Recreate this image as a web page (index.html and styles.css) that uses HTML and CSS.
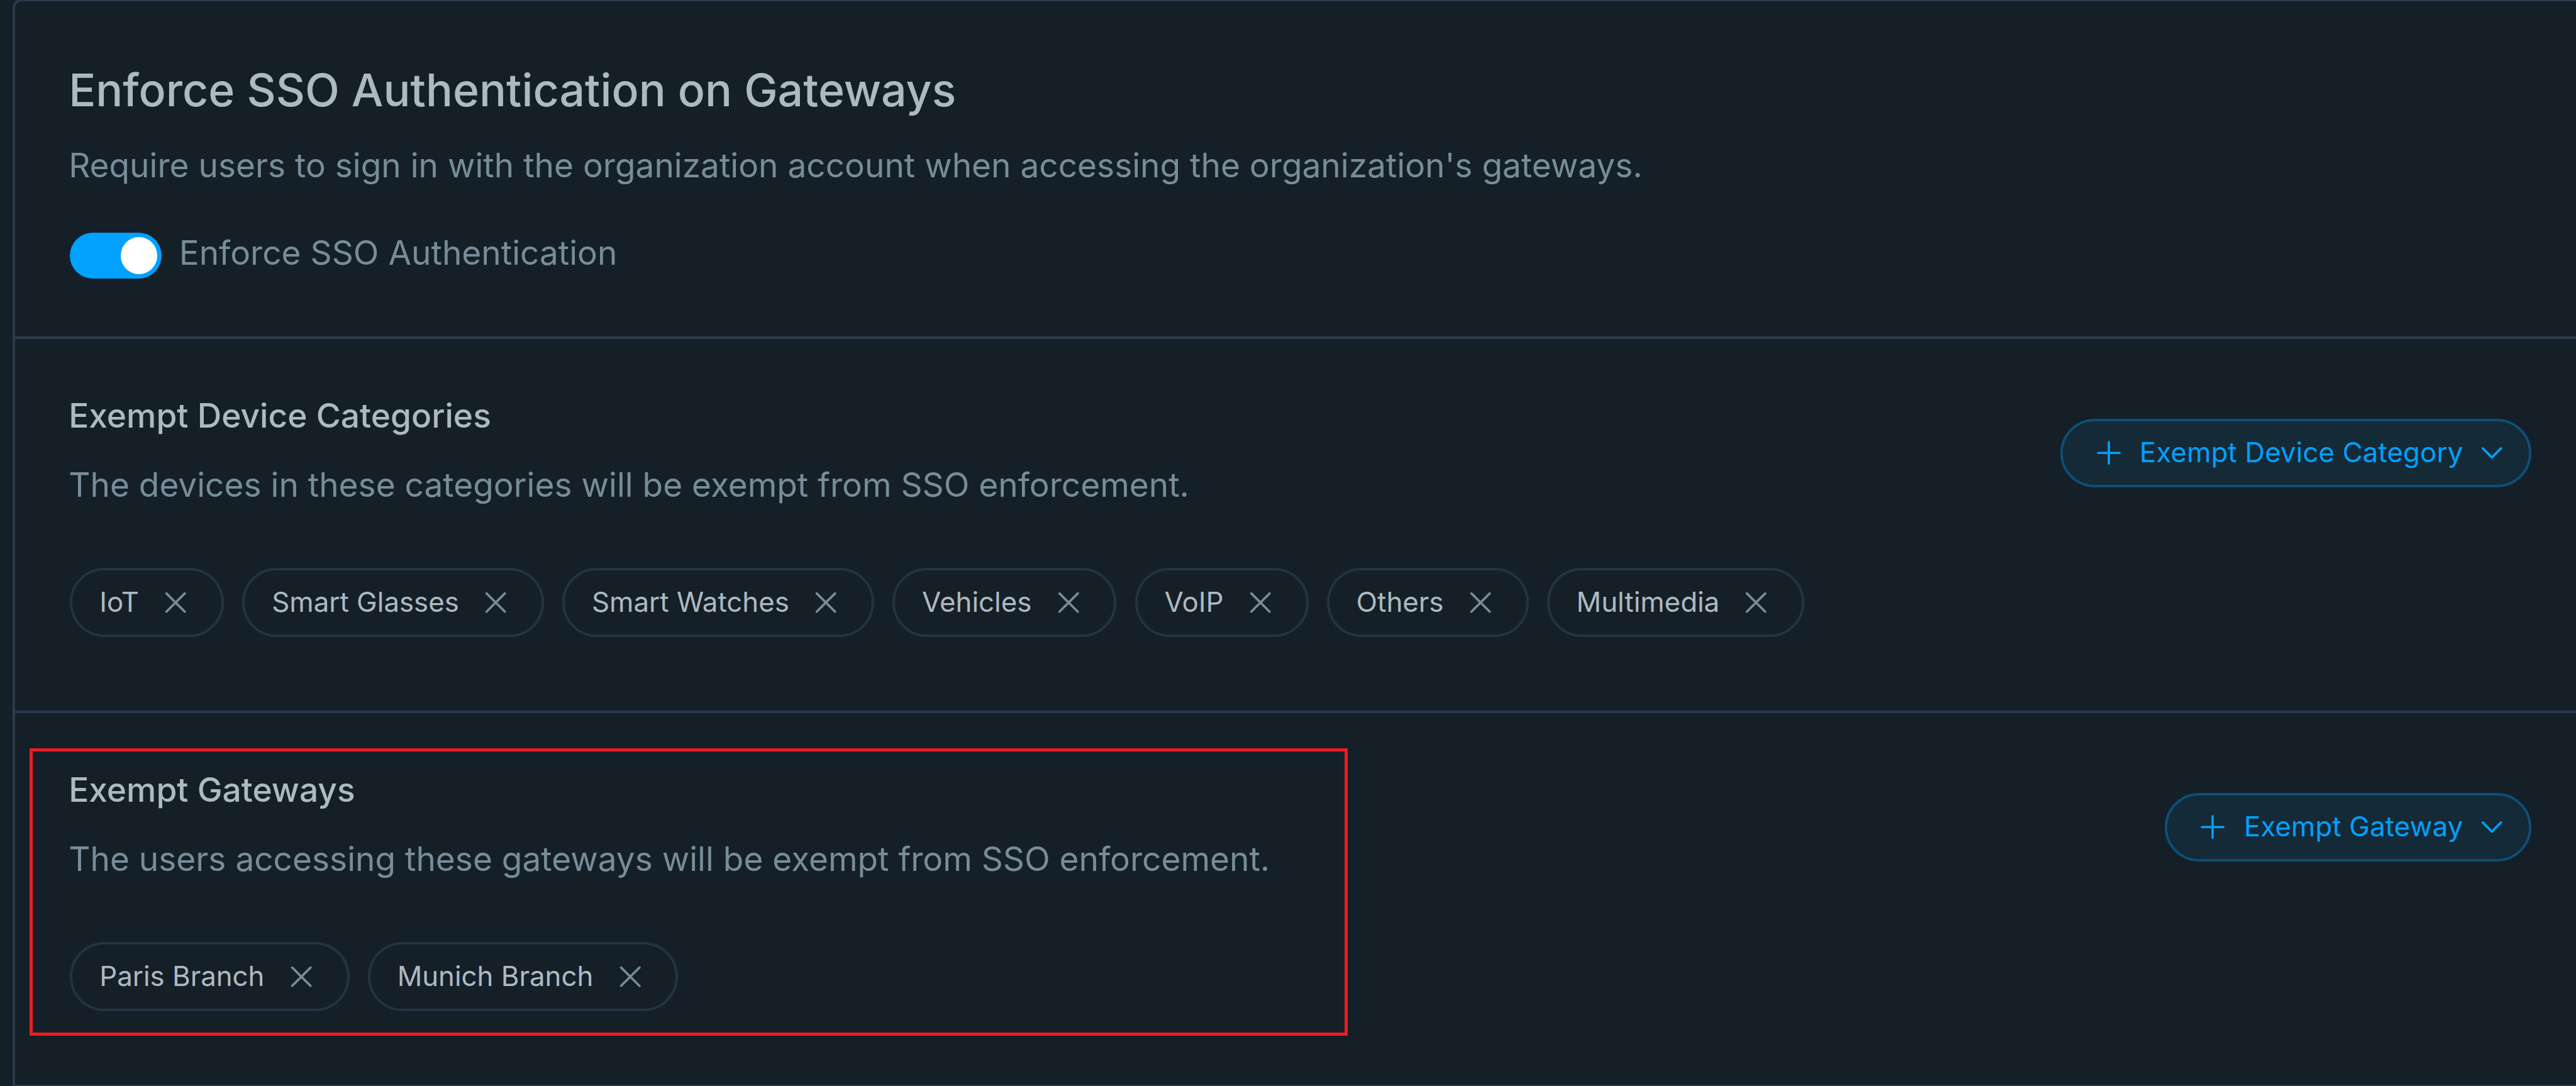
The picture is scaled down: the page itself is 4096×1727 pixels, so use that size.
FILE: index.html
```
<!DOCTYPE html>
<html lang="en">
<head>
<meta charset="utf-8">
<title>Enforce SSO Authentication on Gateways</title>
<link rel="stylesheet" href="styles.css">
</head>
<body>
<svg class="sprite" aria-hidden="true">
  <symbol id="close" viewBox="0 0 16 16"><path d="M4 4l8 8M12 4l-8 8"/></symbol>
  <symbol id="plus" viewBox="0 0 16 16"><path d="M8 3.3v9.4M3.3 8h9.4"/></symbol>
  <symbol id="chevron" viewBox="0 0 16 16"><path d="M4 6l4 4 4-4"/></symbol>
</svg>
<main class="panel">
  <section class="section section-main">
    <h1 class="title">Enforce SSO Authentication on Gateways</h1>
    <p class="desc">Require users to sign in with the organization account when accessing the organization's gateways.</p>
    <div class="toggle-row">
      <span class="toggle" role="switch" aria-checked="true"><span class="knob"></span></span>
      <span class="toggle-label">Enforce SSO Authentication</span>
    </div>
  </section>

  <section class="section">
    <div class="section-body">
      <h2 class="subtitle">Exempt Device Categories</h2>
      <p class="desc">The devices in these categories will be exempt from SSO enforcement.</p>
      <ul class="chips">
        <li class="chip">IoT<svg class="icon"><use href="#close"/></svg></li>
        <li class="chip">Smart Glasses<svg class="icon"><use href="#close"/></svg></li>
        <li class="chip">Smart Watches<svg class="icon"><use href="#close"/></svg></li>
        <li class="chip">Vehicles<svg class="icon"><use href="#close"/></svg></li>
        <li class="chip">VoIP<svg class="icon"><use href="#close"/></svg></li>
        <li class="chip">Others<svg class="icon"><use href="#close"/></svg></li>
        <li class="chip">Multimedia<svg class="icon"><use href="#close"/></svg></li>
      </ul>
    </div>
    <button class="add"><svg class="icon"><use href="#plus"/></svg><span class="add-label">Exempt Device Category</span><svg class="icon"><use href="#chevron"/></svg></button>
  </section>

  <section class="section section-last">
    <div class="section-body">
      <h2 class="subtitle">Exempt Gateways</h2>
      <p class="desc">The users accessing these gateways will be exempt from SSO enforcement.</p>
      <ul class="chips">
        <li class="chip">Paris Branch<svg class="icon"><use href="#close"/></svg></li>
        <li class="chip">Munich Branch<svg class="icon"><use href="#close"/></svg></li>
      </ul>
    </div>
    <button class="add"><svg class="icon"><use href="#plus"/></svg><span class="add-label">Exempt Gateway</span><svg class="icon"><use href="#chevron"/></svg></button>
    <div class="highlight"></div>
  </section>
</main>
</body>
</html>
```
FILE: styles.css
```
:root {
  --bg: #151f27;
  --line: #2b3b4d;
  --chip-line: #243342;
  --text: #adbac2;
  --muted: #778d99;
  --accent: #00a1ff;
  font-size: 3.65062px;
}

* { box-sizing: border-box; }

body {
  margin: 0;
  height: 100vh;
  overflow: hidden;
  background: var(--bg);
  color: var(--text);
  font-family: Inter, "Liberation Sans", sans-serif;
}

.sprite { display: none; }

.panel {
  width: 100vw;
  margin: -0.5rem 0 0 5.5rem;
  border: 4px solid var(--line);
  border-right: 0;
  border-radius: 4rem 0 0 0;
}

.section {
  position: relative;
  display: flex;
  justify-content: space-between;
  align-items: flex-start;
  height: 163rem;
  padding: 21.5rem 25rem 0 23.9rem;
  border-bottom: 4px solid var(--line);
}

.section-main {
  display: block;
  height: 147rem;
  padding-top: 24.7rem;
}

.section-last {
  height: 162rem;
  border-bottom: 0;
}

.title, .subtitle, .desc {
  margin: 0 0 0 -0.6rem;
  white-space: nowrap;
}

.title {
  font-size: 19.6rem;
  font-weight: 500;
  line-height: 28rem;
}

.subtitle {
  font-size: 14.6rem;
  font-weight: 500;
  line-height: 24rem;
}

.desc {
  margin-top: 6rem;
  color: var(--muted);
  font-size: 14.57rem;
  line-height: 24rem;
}

.title + .desc { margin-top: 6.8rem; }

.toggle-row {
  display: flex;
  align-items: flex-start;
  gap: 7.5rem;
  margin-top: 14rem;
}

.toggle {
  display: flex;
  justify-content: flex-end;
  width: 40rem;
  height: 20rem;
  margin-top: 3.3rem;
  padding: 2rem;
  border-radius: 10rem;
  background: var(--accent);
}

.knob {
  width: 16rem;
  height: 16rem;
  border-radius: 50%;
  background: #fff;
}

.toggle-label {
  color: var(--muted);
  font-size: 14.57rem;
  line-height: 24rem;
}

.chips {
  display: flex;
  gap: 8rem;
  margin: 24.3rem 0 0;
  padding: 0;
  list-style: none;
}

.chip {
  display: flex;
  align-items: center;
  gap: 8rem;
  height: 30rem;
  padding: 0 11.9rem 0 11.75rem;
  border: 4px solid var(--chip-line);
  border-radius: 15rem;
  font-size: 12rem;
  line-height: 16rem;
  white-space: nowrap;
}

.icon {
  flex: none;
  width: 16rem;
  height: 16rem;
  fill: none;
  stroke: currentColor;
  stroke-width: 1;
  stroke-linecap: round;
  stroke-linejoin: round;
}

.chip .icon { color: var(--muted); }

.add {
  display: flex;
  align-items: center;
  height: 30rem;
  margin: 13.3rem 0 0;
  padding: 0 8rem 0 12rem;
  border: 4px solid #0d4f78;
  border-radius: 15rem;
  background: #142a37;
  color: var(--accent);
  font: 400 12rem/16rem Inter, "Liberation Sans", sans-serif;
  letter-spacing: 0.03rem;
  white-space: nowrap;
}

.add-label { margin: 0 4.6rem 0 5.5rem; }

/* Callout frame drawn over the gateways block */
.highlight {
  position: absolute;
  top: 15.25rem;
  left: 6.25rem;
  width: 574.25rem;
  height: 125.25rem;
  border: 5px solid #ed1c24;
}
```
